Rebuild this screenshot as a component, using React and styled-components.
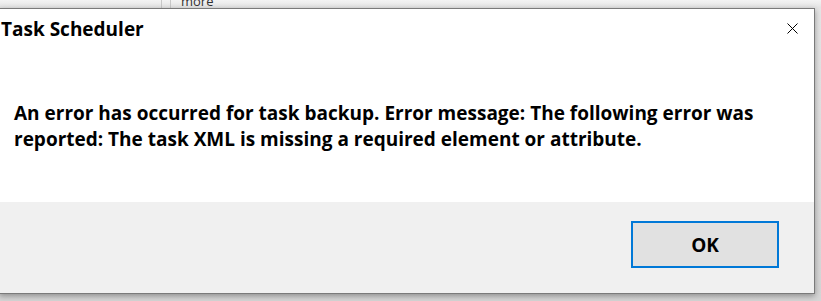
import React from "react";
import styled, { createGlobalStyle } from "styled-components";

const Global = createGlobalStyle`
  html, body { margin: 0; padding: 0; }
  body {
    width: 821px;
    height: 301px;
    overflow: hidden;
    background: #dcdcdc;
    font-family: "Open Sans", "Noto Sans", sans-serif;
  }
`;

const Page = styled.div`
  width: 821px;
  height: 301px;
  display: flex;
  flex-direction: column;
  overflow: hidden;
  background: linear-gradient(#e6e6e6, #d6d6d6);
`;

const BehindStrip = styled.div`
  height: 8px;
  display: flex;
  background: linear-gradient(#f3f3f3, #e4e4e4);
  overflow: hidden;
`;

const BehindCell = styled.div`
  width: ${(p) => p.$w}px;
  flex: none;
  border-right: ${(p) => (p.$line ? "1px solid #c8c8c8" : "none")};
  overflow: hidden;
`;

const BehindText = styled.span`
  display: block;
  font-family: "Open Sans", sans-serif;
  font-size: 13px;
  line-height: 13px;
  color: #333;
  margin-top: -5px;
  padding-left: 10px;
  white-space: nowrap;
`;

const Dialog = styled.div`
  margin-left: -1px;
  width: 816px;
  height: 286px;
  flex: none;
  border: 1px solid #7a7a7a;
  box-sizing: border-box;
  background: #fff;
  display: flex;
  flex-direction: column;
  box-shadow: 0 2px 6px rgba(0, 0, 0, 0.35);
`;

const TitleBar = styled.div`
  height: 42px;
  display: flex;
  align-items: center;
  justify-content: space-between;
  padding-left: 1px;
  padding-right: 12px;
`;

const Title = styled.h1`
  margin: 0;
  font-size: 19px;
  font-weight: 700;
  color: #000;
  margin-top: -2px;
`;

const CloseButton = styled.button`
  width: 20px;
  height: 20px;
  padding: 0;
  border: none;
  background: transparent;
  display: flex;
  align-items: center;
  justify-content: center;
  margin-top: -4px;
`;

const Body = styled.div`
  flex: 1;
  padding: 49px 14px 0 14px;
`;

const Message = styled.p`
  margin: 0;
  font-size: 19px;
  font-weight: 700;
  line-height: 26px;
  color: #000;
  max-width: 770px;
`;

const Footer = styled.div`
  height: 91px;
  flex: none;
  background: #f0f0f0;
  display: flex;
  justify-content: flex-end;
  align-items: flex-start;
  padding: 19px 35px 0 0;
  box-sizing: border-box;
`;

const OkButton = styled.button`
  width: 148px;
  height: 47px;
  box-sizing: border-box;
  border: 2px solid #0078d7;
  background: #e1e1e1;
  font-family: "Open Sans", sans-serif;
  font-size: 19px;
  font-weight: 700;
  color: #000;
  padding: 0;
`;

export default function App() {
  return (
    <>
      <Global />
      <Page>
        <BehindStrip>
          <BehindCell $w={161} $line />
          <BehindCell $w={8} $line />
          <BehindCell $w={652}>
            <BehindText>more</BehindText>
          </BehindCell>
        </BehindStrip>
        <Dialog role="dialog">
          <TitleBar>
            <Title>Task Scheduler</Title>
            <CloseButton aria-label="Close">
              <svg width="11" height="11" viewBox="0 0 11 11">
                <path d="M0.5 0.5 L10.5 10.5 M10.5 0.5 L0.5 10.5" stroke="#000" strokeWidth="1" />
              </svg>
            </CloseButton>
          </TitleBar>
          <Body>
            <Message>
              An error has occurred for task backup. Error message: The following error was
              reported: The task XML is missing a required element or attribute.
            </Message>
          </Body>
          <Footer>
            <OkButton>OK</OkButton>
          </Footer>
        </Dialog>
      </Page>
    </>
  );
}
